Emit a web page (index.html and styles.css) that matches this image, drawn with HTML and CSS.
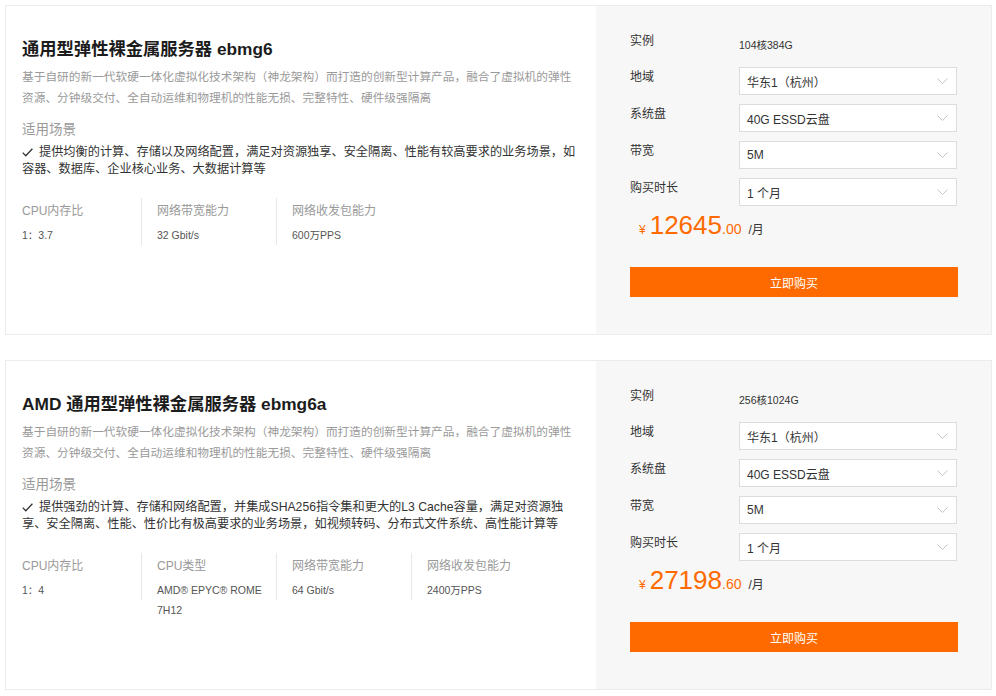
FILE: index.html
```html
<!DOCTYPE html>
<html lang="zh-CN">
<head>
<meta charset="utf-8">
<title>弹性裸金属服务器</title>
<link rel="stylesheet" href="styles.css">
</head>
<body>
<div class="page">
  <div class="card">
    <div class="info">
      <h2 class="title">通用型弹性裸金属服务器 ebmg6</h2>
      <p class="desc">基于自研的新一代软硬一体化虚拟化技术架构（神龙架构）而打造的创新型计算产品，融合了虚拟机的弹性资源、分钟级交付、全自动运维和物理机的性能无损、完整特性、硬件级强隔离</p>
      <h3 class="scene-title">适用场景</h3>
      <p class="scene"><svg class="check" width="11" height="9" viewBox="0 0 11 9"><polyline points="0.7,4.6 3.8,7.8 10.4,0.8"/></svg>提供均衡的计算、存储以及网络配置，满足对资源独享、安全隔离、性能有较高要求的业务场景，如容器、数据库、企业核心业务、大数据计算等</p>
      <div class="specs">
        <div class="spec"><div class="spec-label">CPU内存比</div><div class="spec-value">1：3.7</div></div>
        <div class="spec"><div class="spec-label">网络带宽能力</div><div class="spec-value">32 Gbit/s</div></div>
        <div class="spec"><div class="spec-label">网络收发包能力</div><div class="spec-value">600万PPS</div></div>
      </div>
    </div>
    <div class="buy">
      <div class="row row-inst"><span class="label">实例</span><span class="inst-value">104核384G</span></div>
      <div class="row"><span class="label">地域</span><div class="select"><span>华东1（杭州）</span><svg class="chev" width="11" height="6" viewBox="0 0 11 6"><polyline points="0.5,0.5 5.5,5.5 10.5,0.5"/></svg></div></div>
      <div class="row"><span class="label">系统盘</span><div class="select"><span>40G ESSD云盘</span><svg class="chev" width="11" height="6" viewBox="0 0 11 6"><polyline points="0.5,0.5 5.5,5.5 10.5,0.5"/></svg></div></div>
      <div class="row"><span class="label">带宽</span><div class="select"><span>5M</span><svg class="chev" width="11" height="6" viewBox="0 0 11 6"><polyline points="0.5,0.5 5.5,5.5 10.5,0.5"/></svg></div></div>
      <div class="row"><span class="label">购买时长</span><div class="select"><span>1 个月</span><svg class="chev" width="11" height="6" viewBox="0 0 11 6"><polyline points="0.5,0.5 5.5,5.5 10.5,0.5"/></svg></div></div>
      <div class="price"><span class="yen">¥</span><span class="int">12645</span><span class="dec">.00</span><span class="unit">/月</span></div>
      <button class="btn">立即购买</button>
    </div>
  </div>

  <div class="card">
    <div class="info">
      <h2 class="title">AMD 通用型弹性裸金属服务器 ebmg6a</h2>
      <p class="desc">基于自研的新一代软硬一体化虚拟化技术架构（神龙架构）而打造的创新型计算产品，融合了虚拟机的弹性资源、分钟级交付、全自动运维和物理机的性能无损、完整特性、硬件级强隔离</p>
      <h3 class="scene-title">适用场景</h3>
      <p class="scene"><svg class="check" width="11" height="9" viewBox="0 0 11 9"><polyline points="0.7,4.6 3.8,7.8 10.4,0.8"/></svg>提供强劲的计算、存储和网络配置，并集成SHA256指令集和更大的L3 Cache容量，满足对资源独享、安全隔离、性能、性价比有极高要求的业务场景，如视频转码、分布式文件系统、高性能计算等</p>
      <div class="specs">
        <div class="spec"><div class="spec-label">CPU内存比</div><div class="spec-value">1：4</div></div>
        <div class="spec"><div class="spec-label">CPU类型</div><div class="spec-value">AMD® EPYC® ROME 7H12</div></div>
        <div class="spec"><div class="spec-label">网络带宽能力</div><div class="spec-value">64 Gbit/s</div></div>
        <div class="spec"><div class="spec-label">网络收发包能力</div><div class="spec-value">2400万PPS</div></div>
      </div>
    </div>
    <div class="buy">
      <div class="row row-inst"><span class="label">实例</span><span class="inst-value">256核1024G</span></div>
      <div class="row"><span class="label">地域</span><div class="select"><span>华东1（杭州）</span><svg class="chev" width="11" height="6" viewBox="0 0 11 6"><polyline points="0.5,0.5 5.5,5.5 10.5,0.5"/></svg></div></div>
      <div class="row"><span class="label">系统盘</span><div class="select"><span>40G ESSD云盘</span><svg class="chev" width="11" height="6" viewBox="0 0 11 6"><polyline points="0.5,0.5 5.5,5.5 10.5,0.5"/></svg></div></div>
      <div class="row"><span class="label">带宽</span><div class="select"><span>5M</span><svg class="chev" width="11" height="6" viewBox="0 0 11 6"><polyline points="0.5,0.5 5.5,5.5 10.5,0.5"/></svg></div></div>
      <div class="row"><span class="label">购买时长</span><div class="select"><span>1 个月</span><svg class="chev" width="11" height="6" viewBox="0 0 11 6"><polyline points="0.5,0.5 5.5,5.5 10.5,0.5"/></svg></div></div>
      <div class="price"><span class="yen">¥</span><span class="int">27198</span><span class="dec">.60</span><span class="unit">/月</span></div>
      <button class="btn">立即购买</button>
    </div>
  </div>
</div>
</body>
</html>
```

FILE: styles.css
```css
html, body {
  margin: 0;
  padding: 0;
  background: #fff;
}
body {
  font-family: "Liberation Sans", "Noto Sans CJK SC", sans-serif;
  color: #333;
}
.page {
  padding: 5px 0 0 5px;
}
.card {
  display: flex;
  width: 987px;
  box-sizing: border-box;
  border: 1px solid #ececec;
  margin-bottom: 25px;
}
.info {
  width: 590px;
  box-sizing: border-box;
  padding: 31px 18px 0 16px;
  background: #fff;
}
.title {
  margin: 0;
  font-size: 17.3px;
  line-height: 24px;
  font-weight: bold;
  color: #1c1c1c;
}
.desc {
  margin: 5px 0 0;
  font-size: 11.7px;
  line-height: 21px;
  color: #9a9a9a;
}
.scene-title {
  margin: 12px 0 0;
  font-size: 13.5px;
  line-height: 20px;
  font-weight: normal;
  color: #999;
}
.scene {
  margin: 4px 0 0;
  font-size: 12.2px;
  line-height: 17px;
  color: #333;
}
.check {
  display: inline-block;
  margin-right: 6px;
  vertical-align: -1px;
}
.check polyline {
  fill: none;
  stroke: #333;
  stroke-width: 1.3;
}
.specs {
  display: flex;
  margin-top: 20px;
}
.spec {
  width: 119px;
  height: 44px;
  padding-top: 3px;
  margin-right: 15px;
  border-right: 1px solid #e8e8e8;
}
.spec:last-child {
  border-right: none;
}
.spec-label {
  font-size: 12px;
  line-height: 20px;
  color: #999;
}
.spec-value {
  margin-top: 4px;
  font-size: 10.5px;
  line-height: 20px;
  color: #555;
}
.buy {
  flex: 1;
  background: #f7f7f7;
  padding: 25px 33px 37px 34px;
}
.row {
  display: flex;
}
.row + .row {
  margin-top: 9px;
}
.row-inst {
  height: 27px;
}
.label {
  width: 109px;
  flex: none;
  font-size: 12px;
  line-height: 20px;
  color: #333;
}
.inst-value {
  margin-top: 4px;
  font-size: 10.5px;
  line-height: 20px;
  color: #333;
}
.select {
  width: 218px;
  height: 28px;
  box-sizing: border-box;
  border: 1px solid #dcdcdc;
  background: #fff;
  display: flex;
  align-items: center;
  justify-content: space-between;
  padding: 0 8px 0 7px;
  font-size: 12px;
  color: #333;
}
.chev polyline {
  fill: none;
  stroke: #c4c4c4;
  stroke-width: 1;
}
.price {
  margin-top: 4px;
  padding-left: 9px;
  line-height: 30px;
  height: 30px;
  white-space: nowrap;
  color: #ff6a00;
}
.yen {
  font-size: 12px;
  margin-right: 4px;
}
.int {
  font-size: 26px;
}
.dec {
  font-size: 14px;
}
.unit {
  font-size: 12px;
  color: #333;
  margin-left: 7px;
}
.btn {
  display: block;
  width: 100%;
  height: 30px;
  margin-top: 27px;
  border: none;
  background: #ff6a00;
  color: #fff;
  font-family: inherit;
  font-size: 12px;
  padding: 0;
}
```
